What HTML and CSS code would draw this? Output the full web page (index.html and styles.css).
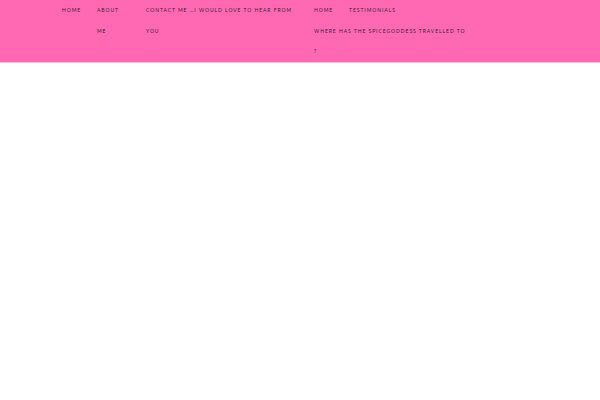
FILE: index.html
```html
<!DOCTYPE html>
<html>
<head>
<meta charset="utf-8">
<link rel="stylesheet" href="styles.css">
</head>
<body>
<header class="bar">
  <nav class="nav">
    <a class="item item-home" href="#">Home</a>
    <a class="item item-about" href="#">About me</a>
    <a class="item item-contact" href="#">Contact Me …I would love to hear from you</a>
    <div class="group">
      <a class="item item-home2" href="#">Home</a>
      <a class="item item-test" href="#">Testimonials</a>
      <a class="item item-where" href="#">Where has the Spicegoddess travelled to ?</a>
    </div>
  </nav>
</header>
</body>
</html>
```
FILE: styles.css
```css
html, body {
  margin: 0;
  padding: 0;
  background: #ffffff;
}
.bar {
  background: #ff69b4;
  height: 62px;
  border-bottom: 1px solid #ffb8dc;
}
.nav {
  display: flex;
  align-items: flex-start;
  padding-left: 62px;
}
.item {
  display: block;
  font-family: Lato, "Liberation Sans", Arial, sans-serif;
  font-size: 5px;
  letter-spacing: 0.95px;
  text-transform: uppercase;
  color: #3a2030;
  text-decoration: none;
  line-height: 20.5px;
}
.item-home { width: 35px; }
.item-about { max-width: 28px; margin-right: 21px; }
.item-contact { width: 148px; margin-right: 20px; }
.group {
  display: flex;
  flex-wrap: wrap;
  width: 154px;
}
.item-home2 { width: 35px; }
.item-test { width: 100px; }
.item-where { width: 154px; }
```
